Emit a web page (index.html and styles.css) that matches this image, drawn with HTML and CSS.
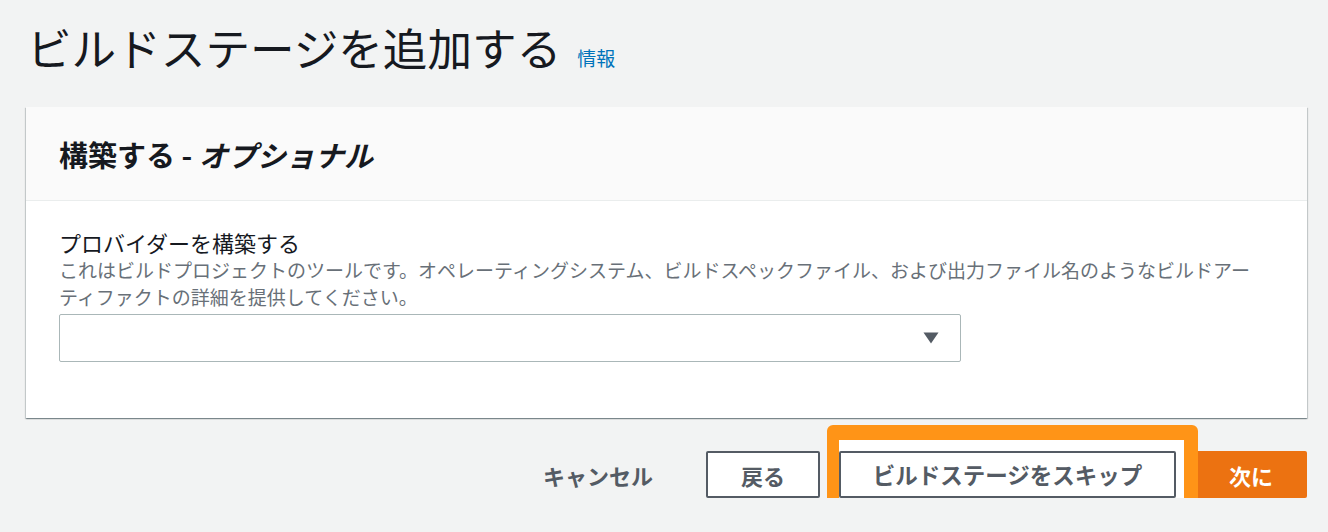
FILE: index.html
```html
<!DOCTYPE html>
<html lang="ja">
<head>
<meta charset="utf-8">
<title>ビルドステージを追加する</title>
<link rel="stylesheet" href="styles.css">
</head>
<body>
<div class="page">
  <div class="title-row">
    <h1 class="title">ビルドステージを追加する</h1>
    <a class="info" href="#">情報</a>
  </div>

  <section class="card">
    <div class="card-header">
      <h2 class="card-title">構築する - <em>オプショナル</em></h2>
    </div>
    <div class="card-body">
      <div class="field-label">プロバイダーを構築する</div>
      <div class="field-desc">これはビルドプロジェクトのツールです。オペレーティングシステム、ビルドスペックファイル、および出力ファイル名のようなビルドアーティファクトの詳細を提供してください。</div>
      <div class="select">
        <svg class="caret" width="16" height="12" viewBox="0 0 16 12"><path d="M0.5 0.5 H15.5 L8 11.5 Z" fill="#545b64"/></svg>
      </div>
    </div>
  </section>

  <div class="actions">
    <button class="btn btn-link">キャンセル</button>
    <button class="btn btn-normal">戻る</button>
    <div class="highlight">
      <button class="btn btn-normal btn-skip">ビルドステージをスキップ</button>
    </div>
    <button class="btn btn-primary">次に</button>
  </div>
</div>
</body>
</html>
```

FILE: styles.css
```css
* { box-sizing: border-box; }

html, body {
  margin: 0;
  background: #f2f3f3;
  font-family: "Noto Sans CJK JP", "Noto Sans", sans-serif;
  color: #16191f;
}

.page {
  padding: 20px 21px 0 26px;
}

.title-row {
  display: flex;
  align-items: baseline;
  gap: 16px;
  padding-left: 1px;
}

.title {
  margin: 0;
  font-size: 44.6px;
  font-weight: 400;
  line-height: 54px;
  color: #16191f;
}

.info {
  font-size: 19px;
  color: #0073bb;
  text-decoration: none;
}

.card {
  margin-top: 33px;
  background: #ffffff;
  box-shadow: 0 1px 1px 0 rgba(0, 28, 36, 0.3), 1px 1px 1px 0 rgba(0, 28, 36, 0.15), -1px 1px 1px 0 rgba(0, 28, 36, 0.15);
}

.card-header {
  height: 94px;
  display: flex;
  align-items: center;
  padding: 0 33px;
  background: #fafafa;
  border-bottom: 1px solid #eaeded;
}

.card-title {
  margin: 0;
  font-size: 29px;
  font-weight: 700;
  line-height: 36px;
  color: #16191f;
}

.card-title em {
  font-style: italic;
}

.card-body {
  padding: 27px 33px 56px 33px;
}

.field-label {
  font-size: 22px;
  line-height: 28px;
  color: #16191f;
}

.field-desc {
  max-width: 1205px;
  font-size: 19px;
  line-height: 27px;
  color: #687078;
}

.select {
  margin-top: 4px;
  width: 902px;
  height: 48px;
  border: 1px solid #aab7b8;
  border-radius: 2px;
  background: #ffffff;
  display: flex;
  align-items: center;
  justify-content: flex-end;
  padding-right: 21px;
}

.caret {
  display: block;
}

.actions {
  display: flex;
  justify-content: flex-end;
  align-items: center;
  gap: 19px;
  margin-top: 33px;
}

.btn {
  font-family: "Noto Sans CJK JP", "Noto Sans", sans-serif;
  font-size: 22px;
  font-weight: 700;
  height: 47px;
  padding: 0 33px;
  border-radius: 2px;
  line-height: 1;
  cursor: pointer;
}

.btn-link {
  background: transparent;
  border: none;
  color: #545b64;
  padding: 0 34px;
}

.btn-normal {
  background: #ffffff;
  border: 2px solid #545b64;
  color: #545b64;
}

.btn-skip {
  width: 337px;
  padding: 0;
  font-size: 22.5px;
}

.btn-primary {
  background: #ec7211;
  border: none;
  color: #ffffff;
  width: 112px;
  padding: 0;
}

/* annotation frame drawn over the row */
.highlight {
  position: relative;
  z-index: 1;
  display: flex;
  background: #ffffff;
  border: solid #ff9417;
  border-width: 15px 14px 14px 12px;
  border-radius: 6px;
  padding: 11px 8px 4px 0;
  margin: -26px -22px -18px -12px;
}
```
